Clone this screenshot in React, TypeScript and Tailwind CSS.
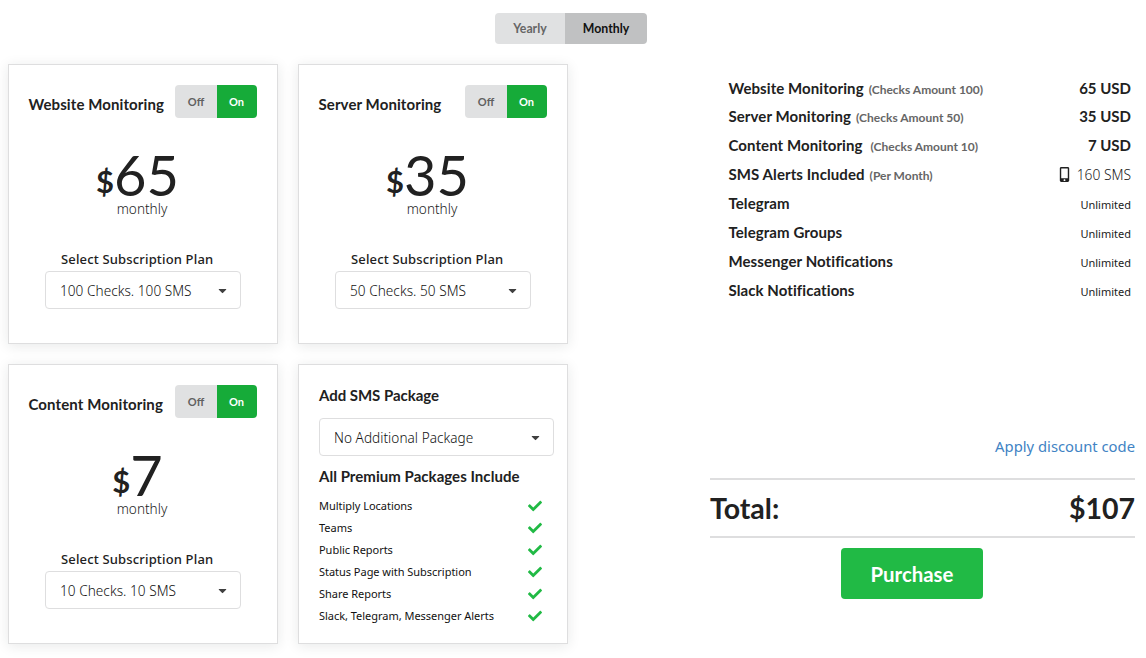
import React from "react";
import { FaCaretDown, FaCheck, FaMobileAlt } from "react-icons/fa";

type SelectProps = {
  value: string;
  className?: string;
};

const Select: React.FC<SelectProps> = ({ value, className = "" }) => (
  <button
    className={`flex justify-between items-center h-[38px] pl-[14px] pr-[11px] rounded border border-[#dededf] bg-white text-left font-['Noto_Sans'] text-[13.6px] font-[350] text-[#111] ${className}`}
  >
    <span className="pt-[3px] tracking-[0.04px]">{value}</span>
    <FaCaretDown className="size-[13px] text-[#404040]" />
  </button>
);

const Card: React.FC<{ children: React.ReactNode }> = ({ children }) => (
  <section className="w-[270px] h-[280px] border border-[#dededf] bg-white shadow-[0_2px_12px_rgba(34,36,38,0.1)]">
    {children}
  </section>
);

type PlanCardProps = {
  title: string;
  price: number;
  plan: string;
};

const PlanCard: React.FC<PlanCardProps> = ({ title, price, plan }) => (
  <Card>
    <div className="flex justify-between pt-5 pl-[19.5px] pr-5">
      <h3 className="pt-[9px] text-[15px] leading-5 font-bold tracking-[0.1px] whitespace-nowrap">
        {title}
      </h3>
      <div className="flex h-[33px] text-[11px] font-bold rounded overflow-hidden">
        <button className="w-[42px] pt-px bg-[#e0e1e2] text-[#606060]">Off</button>
        <button className="w-10 pt-px pr-px bg-[#16ab39] text-white">On</button>
      </div>
    </div>
    <div className="flex justify-center items-baseline mt-[31px] pr-[11px] h-[52px] leading-[52px]">
      <span className="relative -top-[3px] text-[31px] font-bold">$</span>
      <span className="text-[56px]">{price}</span>
    </div>
    <p className="-mt-[2px] pr-[2px] text-center font-['Noto_Sans'] text-[13.6px] leading-5 font-[350]">
      monthly
    </p>
    <p className="mt-[30px] pl-[52px] font-['Noto_Sans'] text-[13px] leading-5 font-medium tracking-[0.16px]">
      Select Subscription Plan
    </p>
    <Select value={plan} className="mt-[2px] ml-9 w-[196px]" />
  </Card>
);

const plans = [
  { title: "Website Monitoring", price: 65, plan: "100 Checks. 100 SMS" },
  { title: "Server Monitoring", price: 35, plan: "50 Checks. 50 SMS" },
  { title: "Content Monitoring", price: 7, plan: "10 Checks. 10 SMS" },
];

const features = [
  "Multiply Locations",
  "Teams",
  "Public Reports",
  "Status Page with Subscription",
  "Share Reports",
  "Slack, Telegram, Messenger Alerts",
];

const PackageCard: React.FC = () => (
  <Card>
    <div className="pl-5 pt-5">
      <h3 className="text-[15px] leading-5 font-bold tracking-[-0.04px]">Add SMS Package</h3>
      <Select value="No Additional Package" className="mt-[13px] w-[235px]" />
      <h3 className="mt-[10px] text-[15px] leading-5 font-bold tracking-[0.04px]">
        All Premium Packages Include
      </h3>
      <ul className="mt-[9px] pr-[25px] font-['Noto_Sans'] text-[11px] tracking-[-0.03px] text-[#111]">
        {features.map((feature) => (
          <li key={feature} className="flex justify-between items-center h-[22px]">
            <span>{feature}</span>
            <FaCheck className="size-[14px] text-[#21ba45]" />
          </li>
        ))}
      </ul>
    </div>
  </Card>
);

const summary = [
  { name: "Website Monitoring", note: "(Checks Amount 100)", value: "65 USD", row: "h-[28px]", gap: "ml-[5px]" },
  { name: "Server Monitoring", note: "(Checks Amount 50)", value: "35 USD", row: "h-[29px]", gap: "ml-[5px]" },
  { name: "Content Monitoring", note: "(Checks Amount 10)", value: "7 USD", row: "h-[29px]", gap: "ml-[8px]" },
];

const channels = ["Telegram", "Telegram Groups", "Messenger Notifications", "Slack Notifications"];

const Summary: React.FC = () => (
  <aside className="w-[425px] pt-[10px]">
    <ul className="pl-[18.5px] pr-1 h-[348px] text-[15px] font-bold tracking-[0.08px]">
      {summary.map(({ name, note, value, row, gap }) => (
        <li key={name} className={`flex items-baseline leading-[29px] ${row}`}>
          <span>{name}</span>
          <span className={`text-xs leading-none tracking-normal text-[#666] ${gap}`}>{note}</span>
          <span className="ml-auto tracking-normal">{value}</span>
        </li>
      ))}
      <li className="flex items-baseline h-[29px] leading-[29px]">
        <span>SMS Alerts Included</span>
        <span className="ml-[5px] text-xs leading-none tracking-normal text-[#666]">(Per Month)</span>
        <span className="ml-auto font-['Noto_Sans'] text-[13.8px] leading-none font-[350] tracking-normal">
          <FaMobileAlt className="inline mr-[5px] -mt-1 size-[15px]" />
          160 SMS
        </span>
      </li>
      {channels.map((name) => (
        <li key={name} className="flex justify-between items-baseline h-[29px] leading-[29px]">
          <span>{name}</span>
          <span className="font-['Noto_Sans'] text-[11px] leading-none font-normal tracking-normal">
            Unlimited
          </span>
        </li>
      ))}
    </ul>
    <div className="flex justify-end h-[56px] pt-[14px]">
      <a href="#discount" className="font-['Noto_Sans'] text-[14.8px] leading-5 text-[#4183c4]">
        Apply discount code
      </a>
    </div>
    <div className="flex justify-between items-center h-[60px] border-y-2 border-[#dededf] text-[28.5px] font-bold">
      <span>Total:</span>
      <span>$107</span>
    </div>
    <div className="flex justify-center pt-[10px] pr-[21px]">
      <button className="w-[142px] h-[51px] pt-[2px] rounded bg-[#21ba45] text-[20.4px] font-bold text-white">
        Purchase
      </button>
    </div>
  </aside>
);

const App: React.FC = () => (
  <main className="h-[658px] overflow-hidden bg-white font-[Lato,sans-serif] text-[#212121]">
    <div className="flex justify-center pt-[13px] pr-1">
      <div className="flex h-[31px] rounded overflow-hidden text-[12.3px] font-bold">
        <button className="w-[70px] pt-[2px] bg-[#e0e1e2] text-[#666]">Yearly</button>
        <button className="w-[82px] pt-[2px] bg-[#c0c1c2] text-[#111]">Monthly</button>
      </div>
    </div>
    <div className="flex justify-between pt-5 pl-2 pr-[11px]">
      <div className="grid grid-cols-[270px_270px] gap-5">
        {plans.map((item) => (
          <PlanCard key={item.title} {...item} />
        ))}
        <PackageCard />
      </div>
      <Summary />
    </div>
  </main>
);

export default App;
